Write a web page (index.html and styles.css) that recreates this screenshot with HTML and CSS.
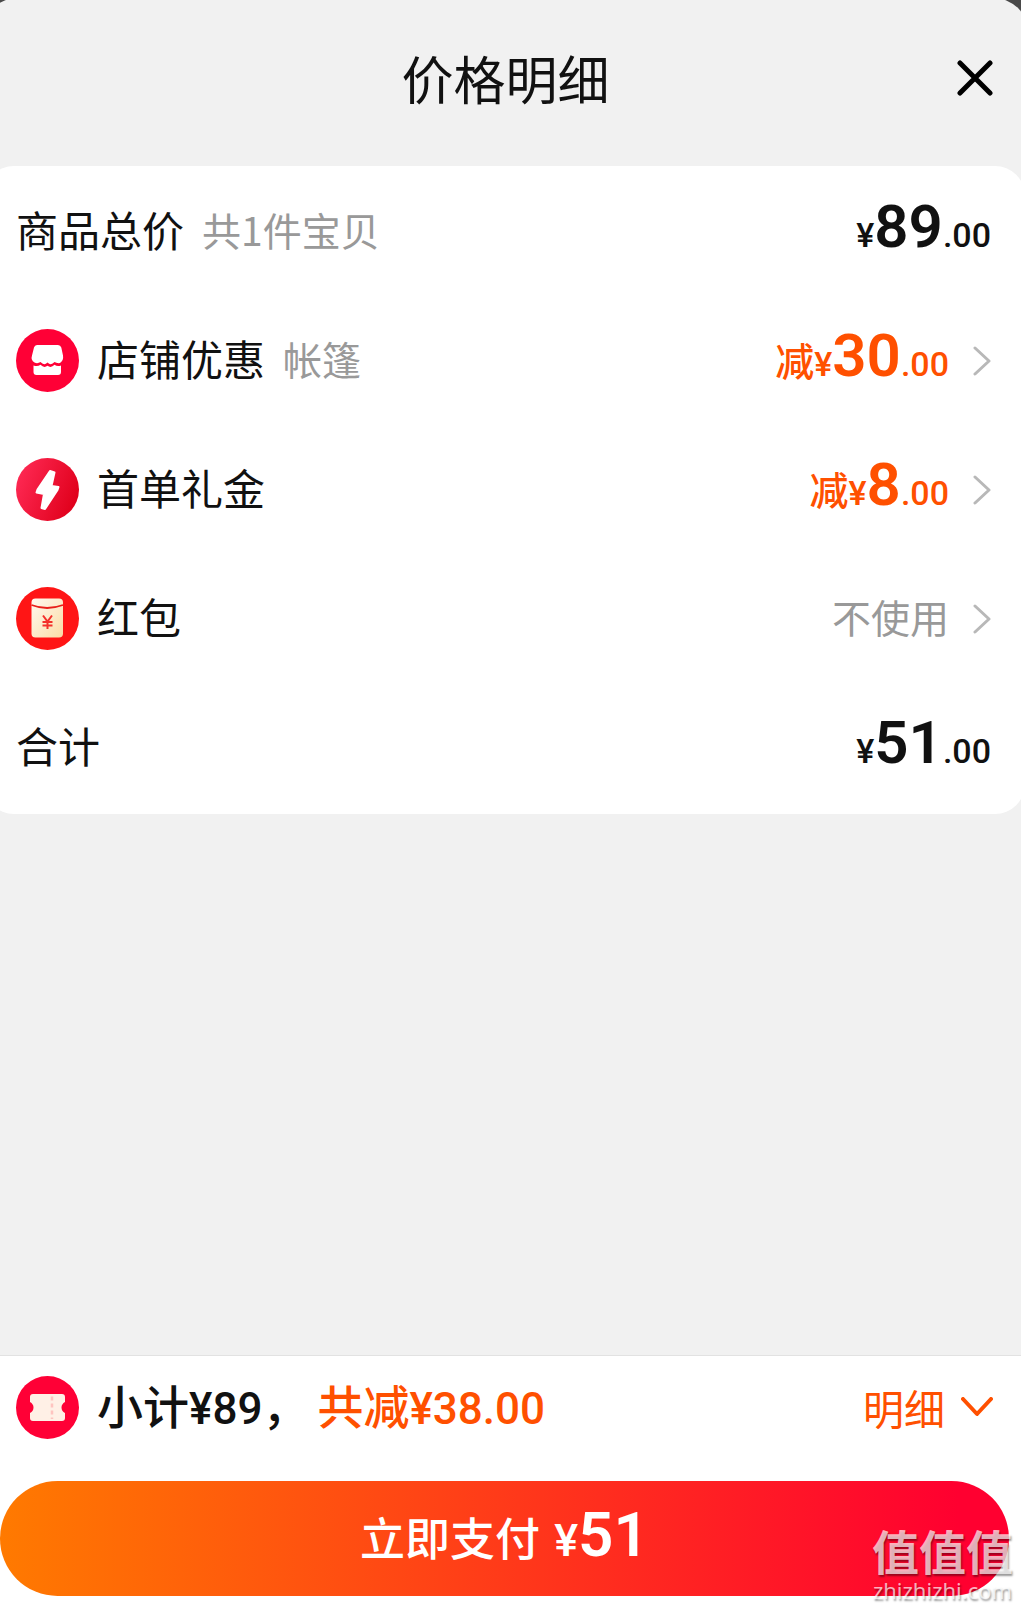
FILE: index.html
```html
<!DOCTYPE html>
<html lang="zh-CN">
<head>
  <meta charset="UTF-8">
  <meta name="viewport" content="width=device-width, initial-scale=1.0">
  <title>价格明细</title>
  <link rel="stylesheet" href="styles.css">
</head>
<body>
  <div class="sheet">
    <header class="sheet-header">
      <h1>价格明细</h1>
      <button type="button" class="btn-close" aria-label="关闭">
        <svg width="36" height="36" viewBox="0 0 36 36" fill="none" stroke="#000" stroke-width="5" stroke-linecap="round">
          <path d="M3 3L33 33M33 3L3 33"/>
        </svg>
      </button>
    </header>

    <!-- 明细 -->
    <main class="card">
      <div class="row">
        <span class="label">商品总价</span>
        <span class="note">共1件宝贝</span>
        <span class="price">¥<b>89</b>.00</span>
      </div>

      <button type="button" class="row">
        <svg class="icon" viewBox="0 0 63 63">
          <circle cx="31.500" cy="31.500" r="31.500" fill="#ff0036"/>
          <path fill="#fff" d="M21 16H42Q44.500 16 45.300 18.500L47 26.500Q47.800 31.500 44 34Q41 34.500 38.500 33Q35 37 31.500 33.500Q28 37 24.500 33Q21.500 35 18.500 33.500Q14.500 31 16 26.500L18 18.500Q18.700 16 21 16Z"/>
          <path fill="#fff" d="M17.500 36.500Q21.500 38 24.500 35.800Q28 39.500 31.500 36.800Q35 39.500 38.500 35.800Q41.500 38 45 36.500V43Q45 46 42 46H20.500Q17.500 46 17.500 43Z"/>
        </svg>
        <span class="label">店铺优惠</span>
        <span class="note">帐篷</span>
        <span class="price minus"><em>减</em>¥<b>30</b>.00</span>
        <svg class="arrow" viewBox="0 0 18 30"><path d="M2 2L16 15L2 28"/></svg>
      </button>

      <button type="button" class="row">
        <svg class="icon" viewBox="0 0 63 63">
          <defs>
            <linearGradient id="gift" x1="0" y1="0.200" x2="1" y2="0.600">
              <stop offset="0" stop-color="#ff2a55"/>
              <stop offset="1" stop-color="#e0001b"/>
            </linearGradient>
          </defs>
          <circle cx="31.500" cy="31.500" r="31.500" fill="url(#gift)"/>
          <path fill="#fff" stroke="#fff" stroke-width="2" stroke-linejoin="round" d="M34 13L38.500 14.500L35.500 28L42.500 29L41.500 32L29 51L25.500 50L28 36L20.500 34.500L21.500 31.500Z"/>
        </svg>
        <span class="label">首单礼金</span>
        <span class="price minus"><em>减</em>¥<b>8</b>.00</span>
        <svg class="arrow" viewBox="0 0 18 30"><path d="M2 2L16 15L2 28"/></svg>
      </button>

      <button type="button" class="row">
        <svg class="icon" viewBox="0 0 63 63">
          <defs>
            <linearGradient id="packet" x1="0" y1="0" x2="1" y2="1">
              <stop offset="0" stop-color="#fffaf0"/>
              <stop offset="1" stop-color="#fbdca6"/>
            </linearGradient>
          </defs>
          <circle cx="31.500" cy="31.500" r="31.500" fill="#ff1515"/>
          <rect x="15.500" y="11.500" width="31.500" height="39" rx="4" fill="url(#packet)"/>
          <path d="M15.500 18Q31 24 47 18" fill="none" stroke="#e8201a" stroke-width="1.800"/>
          <path d="M27 28.500L31.500 34.500L36 28.500M31.500 34.500V42M26.500 35H36.500M26.500 38.500H36.500" fill="none" stroke="#f3302a" stroke-width="2"/>
        </svg>
        <span class="label">红包</span>
        <span class="value">不使用</span>
        <svg class="arrow" viewBox="0 0 18 30"><path d="M2 2L16 15L2 28"/></svg>
      </button>

      <div class="row">
        <span class="label">合计</span>
        <span class="price">¥<b>51</b>.00</span>
      </div>
    </main>

    <!-- 底部支付栏 -->
    <footer class="pay-bar">
      <div class="summary">
        <svg class="icon" viewBox="0 0 63 63">
          <circle cx="31.500" cy="31.500" r="31.500" fill="#ff0036"/>
          <path fill="#fff0e6" d="M17 18H46Q49 18 49 21V26Q45.500 28 45.500 31.500Q45.500 35 49 37V42Q49 45 46 45H17Q14 45 14 42V37Q17.500 35 17.500 31.500Q17.500 28 14 26V21Q14 18 17 18Z"/>
          <path d="M36 20.500V43" stroke="#ffc4c0" stroke-width="2.500" stroke-dasharray="4 3"/>
        </svg>
        <span class="subtotal">小计<span class="num">¥89</span>，</span>
        <span class="saved">共减<span class="num">¥38.00</span></span>
        <button type="button" class="btn-detail">
          明细
          <svg width="32" height="20" viewBox="0 0 32 20" fill="none" stroke="#ff5000" stroke-width="4" stroke-linecap="round" stroke-linejoin="round">
            <path d="M2 2L16 17L30 2"/>
          </svg>
        </button>
      </div>
      <button type="button" class="btn-pay">立即支付 <span class="pay-price">¥<b>51</b></span></button>

      <div class="watermark">
        <span class="mark-name">值值值</span>
        <span class="mark-url">zhizhizhi.com</span>
      </div>
    </footer>
  </div>
</body>
</html>
```

FILE: styles.css
```css
* {
  box-sizing: border-box;
  margin: 0;
  padding: 0;
}

body {
  background: #4a4a4a;
  color: #111;
  font-family: "Noto Sans CJK SC", sans-serif;
  overflow-x: hidden;
}

button {
  border: none;
  background: none;
  color: inherit;
  font: inherit;
  text-align: left;
  cursor: pointer;
}

svg {
  display: block;
  flex: none;
}

/* the sheet bleeds past the screen edges, so only part of its corners shows */
.sheet {
  display: flex;
  flex-direction: column;
  min-height: calc(100vh + 2px);
  margin: -2px -8px 0 -18px;
  padding: 2px 8px 0 18px;
  background: #f1f1f1;
  border-radius: 36px 36px 0 0;
  overflow: hidden;
}

/* 标题 */
.sheet-header {
  display: grid;
  grid-template-columns: 36px 1fr 36px;
  align-items: center;
  height: 166px;
  padding: 0 28px 10px 18px;
}

.sheet-header h1 {
  grid-column: 2;
  font-size: 52px;
  font-weight: 400;
  line-height: 60px;
  text-align: center;
}

/* 明细卡片 */
.card {
  margin: 0 -4px 0 -16px;
  padding: 1px 4px 2px 16px;
  background: #fff;
  border-radius: 30px;
}

.row {
  display: flex;
  align-items: center;
  width: 100%;
  height: 129px;
  padding: 0 30px 0 16px;
}

.icon {
  width: 63px;
  height: 63px;
  margin-right: 18px;
}

.label,
.note,
.value {
  line-height: 60px;
  padding-bottom: 6px;
}

.label {
  font-size: 42px;
}

.note,
.value {
  color: #999;
  font-size: 39px;
}

.note {
  margin-left: 18px;
}

.price,
.value {
  margin-left: auto;
}

.price,
.num,
.pay-price {
  font-family: Roboto, "Noto Sans CJK SC", sans-serif;
  font-weight: 500;
}

.price {
  font-size: 34px;
  line-height: 64px;
  padding-bottom: 2px;
}

.price b {
  font-size: 60px;
  font-weight: 600;
}

.price em {
  font-size: 39px;
  font-style: normal;
}

.minus {
  color: #ff5000;
}

.arrow {
  width: 18px;
  height: 30px;
  margin-left: 24px;
  fill: none;
  stroke: #b8b8b8;
  stroke-width: 3;
  stroke-linecap: round;
  stroke-linejoin: round;
}

/* 支付栏 */
.pay-bar {
  position: relative;
  margin-top: auto;
  padding-bottom: 12px;
  background: #fff;
  border-top: 1px solid #e2e2e2;
}

.summary {
  display: flex;
  align-items: center;
  height: 102px;
  margin-bottom: 23px;
  padding: 0 28px 0 16px;
  font-size: 46px;
  font-weight: 500;
  line-height: 60px;
}

.subtotal,
.saved {
  padding-bottom: 2px;
}

.num {
  font-size: 44px;
}

.saved {
  margin-left: 9px;
  color: #ff5000;
}

.btn-detail {
  display: flex;
  align-items: center;
  gap: 16px;
  margin-left: auto;
  color: #ff5000;
  font-size: 41px;
  font-weight: 400;
}

.btn-pay {
  display: block;
  width: calc(100% - 12px);
  height: 115px;
  padding-bottom: 8px;
  border-radius: 58px;
  background: linear-gradient(90deg, #ff7a00, #ff0030 95%);
  color: #fff;
  font-size: 45px;
  font-weight: 500;
  text-align: center;
}

.pay-price {
  margin-left: 4px;
}

.pay-price b {
  font-size: 62px;
  font-weight: 600;
}

/* 水印 */
.watermark {
  position: absolute;
  right: 8px;
  bottom: 4px;
  display: flex;
  flex-direction: column;
  align-items: center;
  color: rgba(255, 255, 255, 0.7);
  text-shadow: 1px 2px 2px rgba(0, 0, 0, 0.4);
  pointer-events: none;
}

.mark-name {
  font-size: 47px;
  font-weight: 700;
  line-height: 52px;
}

.mark-url {
  font-family: "Noto Sans", sans-serif;
  font-size: 22px;
  line-height: 28px;
}
```
